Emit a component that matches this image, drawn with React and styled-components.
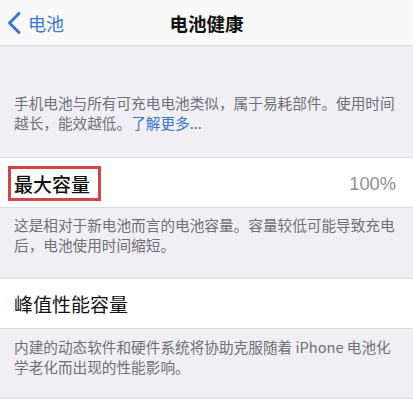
import React from "react";
import styled, { createGlobalStyle } from "styled-components";

const Global = createGlobalStyle`
  html, body { margin: 0; padding: 0; }
  body {
    background: #efeff4;
    font-family: "Noto Sans CJK SC", "Noto Sans", sans-serif;
    -webkit-font-smoothing: antialiased;
  }
`;

const Page = styled.div`
  width: 413px;
  height: 403px;
  overflow: hidden;
  background: #efeff4;
  display: flex;
  flex-direction: column;
`;

const NavBar = styled.header`
  height: 45px;
  flex: none;
  background: #f9f9f9;
  border-bottom: 1px solid #dcdcdf;
  display: grid;
  grid-template-columns: 1fr auto 1fr;
  align-items: center;
`;

const Back = styled.div`
  display: flex;
  align-items: center;
  gap: 7px;
  padding-left: 7px;
  color: #3a76d0;
  font-size: 18px;
  line-height: 1;
`;

const Title = styled.h1`
  margin: 0;
  font-size: 18.5px;
  font-weight: 700;
  color: #111;
  letter-spacing: 0;
`;

const Footer = styled.p`
  margin: 0;
  padding: ${(p) => p.$top}px 14px ${(p) => p.$bottom}px;
  font-size: 14.65px;
  line-height: 20px;
  color: #707075;
`;

const Link = styled.span`
  color: #3a76d0;
`;

const Row = styled.div`
  height: 49px;
  flex: none;
  background: #fff;
  border-top: 1px solid #dcdcdf;
  border-bottom: 1px solid #dcdcdf;
  display: flex;
  align-items: center;
  justify-content: space-between;
  padding: 0 17px 0 14px;
`;

const Label = styled.span`
  font-size: 19px;
  color: #111;
  font-weight: ${(p) => (p.$strong ? 500 : 400)};
  line-height: 1;
`;

const Highlight = styled.span`
  display: inline-flex;
  align-items: center;
  margin-left: -6px;
  margin-top: 2px;
  height: 29px;
  padding: 0 8px 0 3px;
  border: 3px solid #d2434a;
`;

const Value = styled.span`
  font-family: "Liberation Sans", Arial, sans-serif;
  font-size: 18.3px;
  color: #8e8e93;
  margin-top: 2px;
`;

const Bottom = styled.div`
  flex: 1;
  background: #fff;
  border-top: 1px solid #dcdcdf;
`;

export default function App() {
  return (
    <>
      <Global />
      <Page>
        <NavBar>
          <Back>
            <svg width="14" height="22" viewBox="0 0 14 22" fill="none">
              <polyline
                points="12,1.5 2.5,11 12,20.5"
                stroke="#3a76d0"
                strokeWidth="3"
                strokeLinecap="round"
                strokeLinejoin="round"
              />
            </svg>
            <span>电池</span>
          </Back>
          <Title>电池健康</Title>
          <div />
        </NavBar>
        <Footer $top={47} $bottom={24}>
          手机电池与所有可充电电池类似，属于易耗部件。使用时间越长，能效越低。
          <Link>了解更多...</Link>
        </Footer>
        <Row>
          <Highlight>
            <Label $strong>最大容量</Label>
          </Highlight>
          <Value>100%</Value>
        </Row>
        <Footer $top={7} $bottom={23}>
          这是相对于新电池而言的电池容量。容量较低可能导致充电后，电池使用时间缩短。
        </Footer>
        <Row>
          <Label>峰值性能容量</Label>
        </Row>
        <Footer $top={8} $bottom={21}>
          内建的动态软件和硬件系统将协助克服随着 iPhone 电池化学老化而出现的性能影响。
        </Footer>
        <Bottom />
      </Page>
    </>
  );
}
